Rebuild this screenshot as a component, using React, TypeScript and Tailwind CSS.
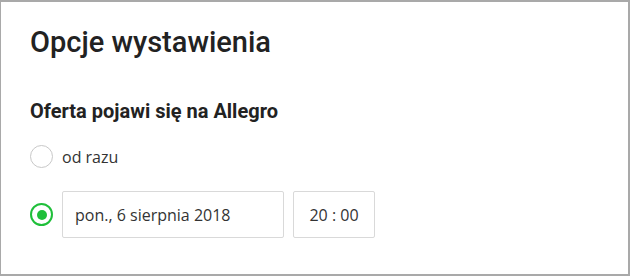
export default function App() {
  return (
    <div className="w-[630px] h-[276px] bg-white border-t-2 border-r-2 border-b-2 border-l border-[#a9a9a9] px-[29px] pt-[22px] font-['Open_Sans',sans-serif] text-[#333]">
      {/* Title */}
      <h1 className="font-['Roboto',sans-serif] text-[29px] leading-[36px] font-medium text-[#222]">
        Opcje wystawienia
      </h1>

      {/* Section heading */}
      <h2 className="mt-[38px] font-['Roboto',sans-serif] text-[20px] leading-[26px] font-bold text-[#222]">
        Oferta pojawi się na Allegro
      </h2>

      {/* Option: now */}
      <label className="mt-[21px] flex items-center gap-[9px]">
        <span className="w-[23px] h-[23px] rounded-full border border-[#c8c8c8] bg-white" />
        <span className="text-[16px] leading-[22px]">od razu</span>
      </label>

      {/* Option: scheduled */}
      <div className="mt-[23px] flex items-center">
        <span className="w-[23px] h-[23px] rounded-full border-[2.5px] border-[#1fbf3a] flex items-center justify-center">
          <span className="w-[10px] h-[10px] rounded-full bg-[#1fbf3a]" />
        </span>
        <div className="ml-[9px] w-[222px] h-[47px] border border-[#d9d9d9] rounded-[2px] flex items-center px-[12px] text-[16px]">
          pon., 6 sierpnia 2018
        </div>
        <div className="ml-[9px] w-[82px] h-[47px] border border-[#d9d9d9] rounded-[2px] flex items-center justify-center text-[16px]">
          20 :&nbsp;00
        </div>
      </div>
    </div>
  );
}
